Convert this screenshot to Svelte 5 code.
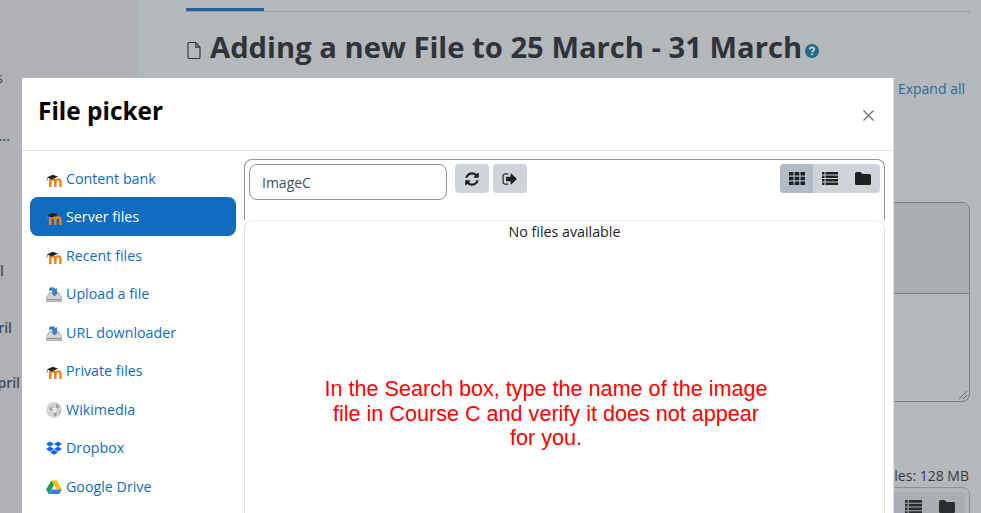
<script>
  const repos = [
    { name: "Content bank", icon: "moodle" },
    { name: "Server files", icon: "moodle", active: true },
    { name: "Recent files", icon: "moodle" },
    { name: "Upload a file", icon: "upload" },
    { name: "URL downloader", icon: "upload" },
    { name: "Private files", icon: "moodle" },
    { name: "Wikimedia", icon: "wiki" },
    { name: "Dropbox", icon: "dropbox" },
    { name: "Google Drive", icon: "drive" }
  ];

  const sideRows = [
    { text: "Courses", cls: "r1" },
    { text: "Topic ...", cls: "r2" },
    { text: "1 April", cls: "r3" },
    { text: "8 April", cls: "r4" },
    { text: "15 April", cls: "r5" }
  ];
</script>

<div class="page">
  <aside class="side">
    {#each sideRows as row}
      <div class="side-row {row.cls}"><span>{row.text}</span></div>
    {/each}
  </aside>

  <main class="main">
    <div class="tabs"><div class="tab-active"></div></div>
    <h1 class="title">
      <svg class="doc" viewBox="0 0 14 17" width="14" height="17">
        <path d="M1 1.500a1 1 0 0 1 1-1h6.700l4.300 4.600v10.400a1 1 0 0 1-1 1H2a1 1 0 0 1-1-1z M8.700.5v4.600h4.300" fill="none" stroke="currentColor" stroke-width="1.100" />
      </svg>
      <span>Adding a new File to 25 March - 31 March</span>
      <svg class="help" viewBox="0 0 14 14" width="14" height="14">
        <circle cx="7" cy="7" r="7" fill="#1f6c8d" />
        <path d="M4.900 5.400c.1-1.300 1-2 2.200-2 1.200 0 2.100.7 2.100 1.800 0 1.600-2 1.500-2 3" fill="none" stroke="#d3d8db" stroke-width="1.700" />
        <rect x="6.200" y="9.400" width="1.800" height="1.700" fill="#d3d8db" />
      </svg>
    </h1>
    <div class="expand">Expand all</div>
    <div class="editor">
      <div class="editor-top"></div>
      <svg class="grip" viewBox="0 0 10 10" width="10" height="10">
        <path d="M1 9 9 1M5 9l4-4" stroke="#6c7075" fill="none" />
      </svg>
    </div>
    <div class="limits">Maximum size for new files: 128 MB</div>
    <div class="fm-bar">
      <div class="fm-icons">
        <svg viewBox="0 0 16 13" width="17" height="14"><path d="M0 0h2.500v2.500H0zM3.500 0H16v2.500H3.500zM0 3.500h2.500V6H0zM3.500 3.500H16V6H3.500zM0 7h2.500v2.500H0zM3.500 7H16v2.500H3.500zM0 10.500h2.500V13H0zM3.500 10.500H16V13H3.500z" fill="#2a2e33" /></svg>
        <svg viewBox="0 0 16 13" width="16" height="13"><path d="M1.500 0h4l2 2h7A1.500 1.500 0 0 1 16 3.500v8a1.500 1.500 0 0 1-1.500 1.500h-13A1.500 1.500 0 0 1 0 11.500v-10A1.500 1.500 0 0 1 1.500 0z" fill="#2a2e33" /></svg>
      </div>
    </div>
  </main>

  <section class="modal">
    <header class="modal-head">
      <h2>File picker</h2>
      <svg class="close" viewBox="0 0 11 11" width="11" height="11">
        <path d="M.5.5l10 10M10.500.5l-10 10" stroke="#6a6f75" stroke-width="1.200" fill="none" />
      </svg>
    </header>
    <div class="modal-body">
      <nav class="repos">
        {#each repos as repo}
          <div class="repo" class:active={repo.active}>
            <span class="ico">
              {#if repo.icon === "moodle"}
                <svg viewBox="0 0 17 16" width="17" height="16">
                  <path d="M4.200 16V8M4.200 11c0-1.600 1-2.600 2.500-2.600S9.300 9.400 9.300 11v5M9.300 11c0-1.600 1-2.600 2.600-2.600s2.500 1 2.500 2.600v5" fill="none" stroke="#f98012" stroke-width="2.400" />
                  <path d="M.8 6.500 6.500 3.700 12 5.500 6 8.600z" fill="#222" />
                  <path d="M1.200 6.500v3.400" stroke="#777" stroke-width=".8" />
                </svg>
              {:else if repo.icon === "upload"}
                <svg viewBox="0 0 16 16" width="16" height="16">
                  <path d="M3.500 6.500h9L16 12v3.500H0V12z" fill="#d4d4d0" stroke="#8c8c8a" stroke-width=".6" />
                  <path d="M1 13h14v1.200H1z" fill="#8f8f8d" />
                  <path d="M3 4.500a3 3 0 0 1 3-3.300c1.500 0 2.500.6 3.500 1.800l1.500-1v6H5.500l1.500-1.600C6.300 5 5.500 4.500 4.800 4.800z" fill="#3f7fc4" />
                  <path d="M5.500 7.200h6.300L8.500 10.500z" fill="#3f7fc4" />
                </svg>
              {:else if repo.icon === "wiki"}
                <svg viewBox="0 0 16 16" width="16" height="16">
                  <circle cx="8" cy="8" r="7.700" fill="#d2d2d2" />
                  <path d="M2.500 4.500l2.500 1.500 1.500-1.500 1 3-2.500 1.500zM10 1.500l3.500 2.500-1.500 3-2-1zM8 10.500l3 .5-1 3.800-2-1zM13 9l2 .5-1.500 3z" fill="#a0a0a0" />
                  <path d="M6 6.500h5M7 6.500l1.500 4 2-4" stroke="#f4f4f4" stroke-width=".9" fill="none" />
                </svg>
              {:else if repo.icon === "dropbox"}
                <svg viewBox="0 0 16 16" width="16" height="16">
                  <path d="M4 1.500 8 4 4 6.500 0 4zM12 1.500 16 4l-4 2.500L8 4zM0 9l4-2.500L8 9l-4 2.500zM8 9l4-2.500L16 9l-4 2.500zM4 12.300l4-2.500 4 2.500-4 2.500z" fill="#0f62fe" />
                </svg>
              {:else}
                <svg viewBox="0 0 16 16" width="16" height="16">
                  <path d="M5.400 1.500h5.200L16 10.500h-5.200z" fill="#fbbc04" />
                  <path d="M5.400 1.500 8 6 2.700 15 0 10.500z" fill="#1b9e55" />
                  <path d="M5.300 10.500H16L13.300 15H2.700z" fill="#3f7ee8" />
                </svg>
              {/if}
            </span>
            <span>{repo.name}</span>
          </div>
        {/each}
      </nav>

      <div class="panel">
        <div class="toolbar">
          <div class="search">ImageC</div>
          <div class="tool-btn">
            <svg viewBox="0 0 1792 1792" width="16" height="16"><path d="M1639 1056q0 5-1 7-64 268-268 434.500t-478 166.500q-146 0-282.500-55t-243.500-157l-129 129q-19 19-45 19t-45-19-19-45v-448q0-26 19-45t45-19h448q26 0 45 19t19 45-19 45l-137 137q71 66 161 102t187 36q134 0 250-65t186-179q11-17 53-117 8-23 30-23h192q13 0 22.500 9.500t9.500 22.500zm25-800v448q0 26-19 45t-45 19h-448q-26 0-45-19t-19-45 19-45l138-138q-148-137-349-137-134 0-250 65t-186 179q-11 17-53 117-8 23-30 23h-199q-13 0-22.500-9.500t-9.500-22.500v-7q65-268 270-434.500t480-166.500q146 0 284 55.500t245 156.500l130-129q19-19 45-19t45 19 19 45z" fill="#1d2125" /></svg>
          </div>
          <div class="tool-btn">
            <svg viewBox="0 0 1792 1792" width="16" height="16"><path d="M704 1440q0 4 1 20t.500 26.500-3 23.500-10 19.500-20.500 6.500h-320q-119 0-203.500-84.500t-84.500-203.500v-704q0-119 84.500-203.500t203.500-84.500h320q13 0 22.500 9.500t9.500 22.500q0 4 1 20t.500 26.500-3 23.500-10 19.500-20.500 6.500h-320q-66 0-113 47t-47 113v704q0 66 47 113t113 47h312l11.500 1 11.500 3 8 5.500 7 9 2 13.500zm928-544q0 26-19 45l-544 544q-19 19-45 19t-45-19-19-45v-288h-448q-26 0-45-19t-19-45v-384q0-26 19-45t45-19h448v-288q0-26 19-45t45-19 45 19l544 544q19 19 19 45z" fill="#1d2125" /></svg>
          </div>
          <div class="views">
            <div class="view on">
              <svg viewBox="0 0 16 13" width="16" height="13"><path d="M0 0h4.500v3.500H0zM5.700 0h4.600v3.500H5.700zM11.500 0H16v3.500h-4.500zM0 4.700h4.500v3.600H0zM5.700 4.700h4.600v3.600H5.700zM11.500 4.700H16v3.600h-4.500zM0 9.500h4.500V13H0zM5.700 9.500h4.600V13H5.700zM11.500 9.500H16V13h-4.500z" fill="#1d2125" /></svg>
            </div>
            <div class="view">
              <svg viewBox="0 0 16 13" width="16" height="13"><path d="M0 0h2.500v2.500H0zM3.500 0H16v2.500H3.500zM0 3.500h2.500V6H0zM3.500 3.500H16V6H3.500zM0 7h2.500v2.500H0zM3.500 7H16v2.500H3.500zM0 10.500h2.500V13H0zM3.500 10.500H16V13H3.500z" fill="#1d2125" /></svg>
            </div>
            <div class="view">
              <svg viewBox="0 0 16 13" width="16" height="13"><path d="M1.500 0h4l2 2h7A1.500 1.500 0 0 1 16 3.500v8a1.500 1.500 0 0 1-1.500 1.500h-13A1.500 1.500 0 0 1 0 11.500v-10A1.500 1.500 0 0 1 1.500 0z" fill="#1d2125" /></svg>
            </div>
          </div>
        </div>
        <div class="content">
          <div class="empty">No files available</div>
          <p class="note">In the Search box, type the name of the image file in Course C and verify it does not appear for you.</p>
        </div>
      </div>
    </div>
  </section>
</div>

<style>
  :global(body) {
    margin: 0;
    background: #b5b8bb;
  }

  .page {
    position: relative;
    display: flex;
    height: 513px;
    overflow: hidden;
    background: #b5b8bb;
    font-family: "Open Sans", "Noto Sans", sans-serif;
    color: #2f343a;
  }

  .side {
    width: 138px;
    flex: none;
    background: #b0b2b5;
    font-size: 14px;
    color: #3f4f62;
  }

  .side-row {
    display: flex;
    justify-content: flex-end;
    white-space: nowrap;
    font-weight: 600;
    height: 20px;
    line-height: 20px;
  }

  .r1 { width: 3px; margin-top: 68px; font-weight: 400; }
  .r2 { width: 10px; margin-top: 38px; }
  .r3 { width: 4px; margin-top: 115px; }
  .r4 { width: 12px; margin-top: 37px; }
  .r5 { width: 20px; margin-top: 35px; }

  .main {
    width: 784px;
    height: 513px;
    margin-left: 48px;
    flex: none;
    display: flex;
    flex-direction: column;
  }

  .main > * {
    flex: none;
  }

  .tabs {
    margin-top: 11px;
    height: 1px;
    background: #9a9ea3;
  }

  .tab-active {
    width: 78px;
    height: 3px;
    margin-top: -3px;
    background: #23629b;
  }

  .title {
    display: flex;
    align-items: center;
    margin: 17px 0 0;
    height: 36px;
    font-size: 29.200px;
    line-height: 36px;
    font-weight: 700;
    white-space: nowrap;
    color: #2f343a;
  }

  .doc {
    margin: 6px 9px 0 1px;
    flex: none;
  }

  .help {
    margin: 7px 0 0 3px;
    flex: none;
  }

  .expand {
    align-self: flex-end;
    margin: 14px 5px 0 0;
    font-size: 14px;
    line-height: 20px;
    color: #2a6a9e;
  }

  .editor {
    position: relative;
    margin-top: 103px;
    height: 198px;
    border: 1px solid #7b8087;
    border-radius: 8px;
    overflow: hidden;
  }

  .editor-top {
    height: 90px;
    background: #abaeb0;
    border-bottom: 1px solid #7b8087;
  }

  .grip {
    position: absolute;
    right: 1px;
    bottom: 1px;
  }

  .limits {
    align-self: flex-end;
    margin: 64px 1px 0 0;
    font-size: 14px;
    line-height: 20px;
    white-space: nowrap;
    color: #353a40;
  }

  .fm-bar {
    margin-top: 1px;
    height: 40px;
    border: 1px solid #8d9196;
    border-radius: 8px;
    padding: 4px;
    box-sizing: border-box;
  }

  .fm-icons {
    display: flex;
    justify-content: flex-end;
    align-items: center;
    gap: 17px;
    height: 29px;
    padding-right: 10px;
    background: #a9aeb4;
    border-radius: 4px;
  }

  .modal {
    position: absolute;
    left: 22px;
    top: 78px;
    width: 872px;
    height: 460px;
    box-sizing: border-box;
    background: #fff;
    border-right: 1px solid #dee2e6;
    display: flex;
    flex-direction: column;
    color: #1d2125;
  }

  .modal-head {
    height: 72px;
    flex: none;
    display: flex;
    align-items: center;
    justify-content: space-between;
    padding: 0 19px 0 16px;
    border-bottom: 1px solid #dee2e6;
  }

  .modal-head h2 {
    margin: 0;
    font-size: 24.400px;
    line-height: 30px;
    font-weight: 700;
    color: #000;
    position: relative;
    top: -3px;
  }

  .close {
    margin-top: 2px;
  }

  .modal-body {
    display: flex;
    gap: 8px;
    padding: 8px 8px 0;
    flex: 1;
  }

  .repos {
    width: 206px;
    flex: none;
    font-size: 14.250px;
  }

  .repo {
    height: 38.500px;
    display: flex;
    align-items: center;
    gap: 4px;
    padding-left: 16px;
    color: #0f6cbf;
    border-radius: 8px;
  }

  .repo.active {
    height: 39.500px;
    margin-top: -1px;
    background: #0f6cbf;
    color: #fff;
  }

  .ico {
    width: 16px;
    height: 16px;
    flex: none;
    margin-top: 1px;
  }

  .ico svg {
    display: block;
  }

  .panel {
    flex: 1;
    display: flex;
    flex-direction: column;
    min-width: 0;
  }

  .toolbar {
    height: 61px;
    box-sizing: border-box;
    flex: none;
    display: flex;
    align-items: flex-start;
    gap: 4px;
    padding: 4px;
    border: 1px solid #8f959e;
    border-bottom: 0;
    border-radius: 8px 8px 0 0;
  }

  .search {
    width: 198px;
    height: 36px;
    box-sizing: border-box;
    margin-right: 4px;
    padding-left: 12px;
    border: 1px solid #8f959e;
    border-radius: 8px;
    font-size: 14px;
    line-height: 36px;
    color: #495057;
  }

  .tool-btn {
    width: 34px;
    height: 29px;
    display: flex;
    align-items: center;
    justify-content: center;
    background: #ced4da;
    border-radius: 4px;
  }

  .views {
    display: flex;
    margin-left: auto;
    background: #ced4da;
    border-radius: 4px;
    overflow: hidden;
  }

  .view {
    width: 33.330px;
    height: 29px;
    display: flex;
    align-items: center;
    justify-content: center;
  }

  .view.on {
    background: #b1bcc6;
  }

  .content {
    position: relative;
    flex: 1;
    border: 1px solid #dee2e6;
    border-top-color: #f1f2f4;
    border-radius: 8px;
    background: #fff;
  }

  .empty {
    margin-top: 1px;
    text-align: center;
    font-size: 14.250px;
    line-height: 20px;
  }

  .note {
    position: absolute;
    left: 76px;
    width: 450px;
    top: 156px;
    margin: 0;
    text-align: center;
    font-family: "Liberation Sans", Arial, sans-serif;
    font-size: 21.600px;
    line-height: 24.500px;
    color: #f00;
  }
</style>
